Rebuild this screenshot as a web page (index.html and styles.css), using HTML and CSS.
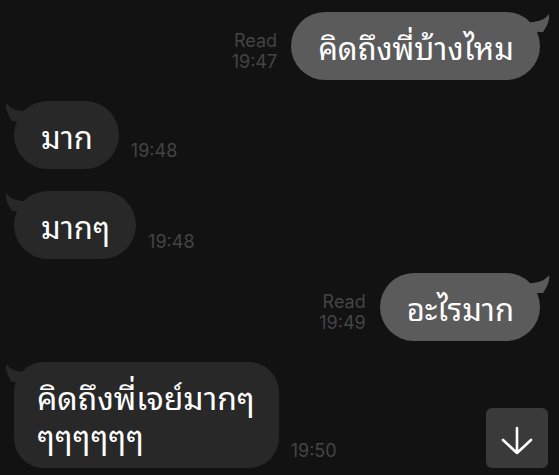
FILE: index.html
```html
<!DOCTYPE html>
<html lang="th">
<head>
<meta charset="utf-8">
<link rel="stylesheet" href="styles.css">
</head>
<body>
<div class="chat">
  <div class="row out r1">
    <div class="meta"><span>Read</span><span>19:47</span></div>
    <div class="bubble sent">คิดถึงพี่บ้างไหม<svg class="tail tail-r" viewBox="0 0 20 20"><path d="M0 8 C6 8 14 6 18 0 C19 6 16 12 12 18 L0 18 Z"/></svg></div>
  </div>
  <div class="row in r2">
    <div class="bubble recv">มาก<svg class="tail tail-l" viewBox="0 0 20 20"><path d="M20 8 C14 8 6 6 2 0 C1 6 4 12 8 18 L20 18 Z"/></svg></div>
    <div class="meta"><span>19:48</span></div>
  </div>
  <div class="row in r3">
    <div class="bubble recv">มากๆ<svg class="tail tail-l" viewBox="0 0 20 20"><path d="M20 8 C14 8 6 6 2 0 C1 6 4 12 8 18 L20 18 Z"/></svg></div>
    <div class="meta meta-low"><span>19:48</span></div>
  </div>
  <div class="row out r4">
    <div class="meta"><span>Read</span><span>19:49</span></div>
    <div class="bubble sent">อะไรมาก<svg class="tail tail-r" viewBox="0 0 20 20"><path d="M0 8 C6 8 14 6 18 0 C19 6 16 12 12 18 L0 18 Z"/></svg></div>
  </div>
  <div class="row in r5">
    <div class="bubble recv multi"><span class="line">คิดถึงพี่เจย์มากๆ</span><span class="line">ๆๆๆๆๆๆ</span><svg class="tail tail-l" viewBox="0 0 20 20"><path d="M20 8 C14 8 6 6 2 0 C1 6 4 12 8 18 L20 18 Z"/></svg></div>
    <div class="meta meta-low"><span>19:50</span></div>
  </div>
</div>
<button class="scroll-down" aria-label="Scroll to bottom">
  <svg viewBox="0 0 62 60" width="62" height="60"><path d="M31 20 V45 M17 32 L31 45 L45 32" fill="none" stroke="#fff" stroke-width="2.6" stroke-linecap="round" stroke-linejoin="round"/></svg>
</button>
</body>
</html>
```
FILE: styles.css
```css
html, body {
  margin: 0;
  padding: 0;
  background: #121212;
  width: 559px;
  height: 475px;
  overflow: hidden;
}
body {
  position: relative;
  font-family: "Noto Sans Thai Looped", "Noto Sans Thai", "Noto Sans", sans-serif;
}
.chat {
  display: flex;
  flex-direction: column;
  padding: 12px 19px 0 14px;
}
.row {
  display: flex;
  align-items: flex-end;
}
.row.out { justify-content: flex-end; gap: 14px; }
.row.in { justify-content: flex-start; gap: 12px; }
.r2 { margin-top: 21px; }
.r3 { margin-top: 22px; }
.r4 { margin-top: 14px; }
.r5 { margin-top: 21px; }
.bubble {
  position: relative;
  height: 68px;
  box-sizing: border-box;
  padding: 0 26px 0 27px;
  border-radius: 34px;
  font-size: 31px;
  line-height: 68px;
  color: #fff;
  white-space: nowrap;
}
.bubble.multi {
  display: flex;
  flex-direction: column;
  height: auto;
  font-size: 32px;
  line-height: 38px;
  padding: 15px 24px 15px 23px;
  border-radius: 30px;
}
.line { display: block; height: 38px; }
.sent { background: #5b5b5b; }
.recv { background: #282828; }
.tail {
  position: absolute;
  top: 2px;
  width: 20px;
  height: 20px;
}
.tail-r { right: -11px; fill: #5b5b5b; }
.tail-l { left: -10px; fill: #282828; }
.meta {
  display: flex;
  flex-direction: column;
  align-items: flex-end;
  font-family: "Inter", "Liberation Sans", sans-serif;
  font-size: 18px;
  line-height: 21px;
  color: #444444;
  padding-bottom: 8px;
}
.meta-low { padding-bottom: 7px; }
.scroll-down {
  position: absolute;
  left: 486px;
  top: 408px;
  width: 62px;
  height: 60px;
  padding: 0;
  border: 0;
  border-radius: 6px;
  background: #3a3a3a;
}
.scroll-down svg { display: block; }
```
